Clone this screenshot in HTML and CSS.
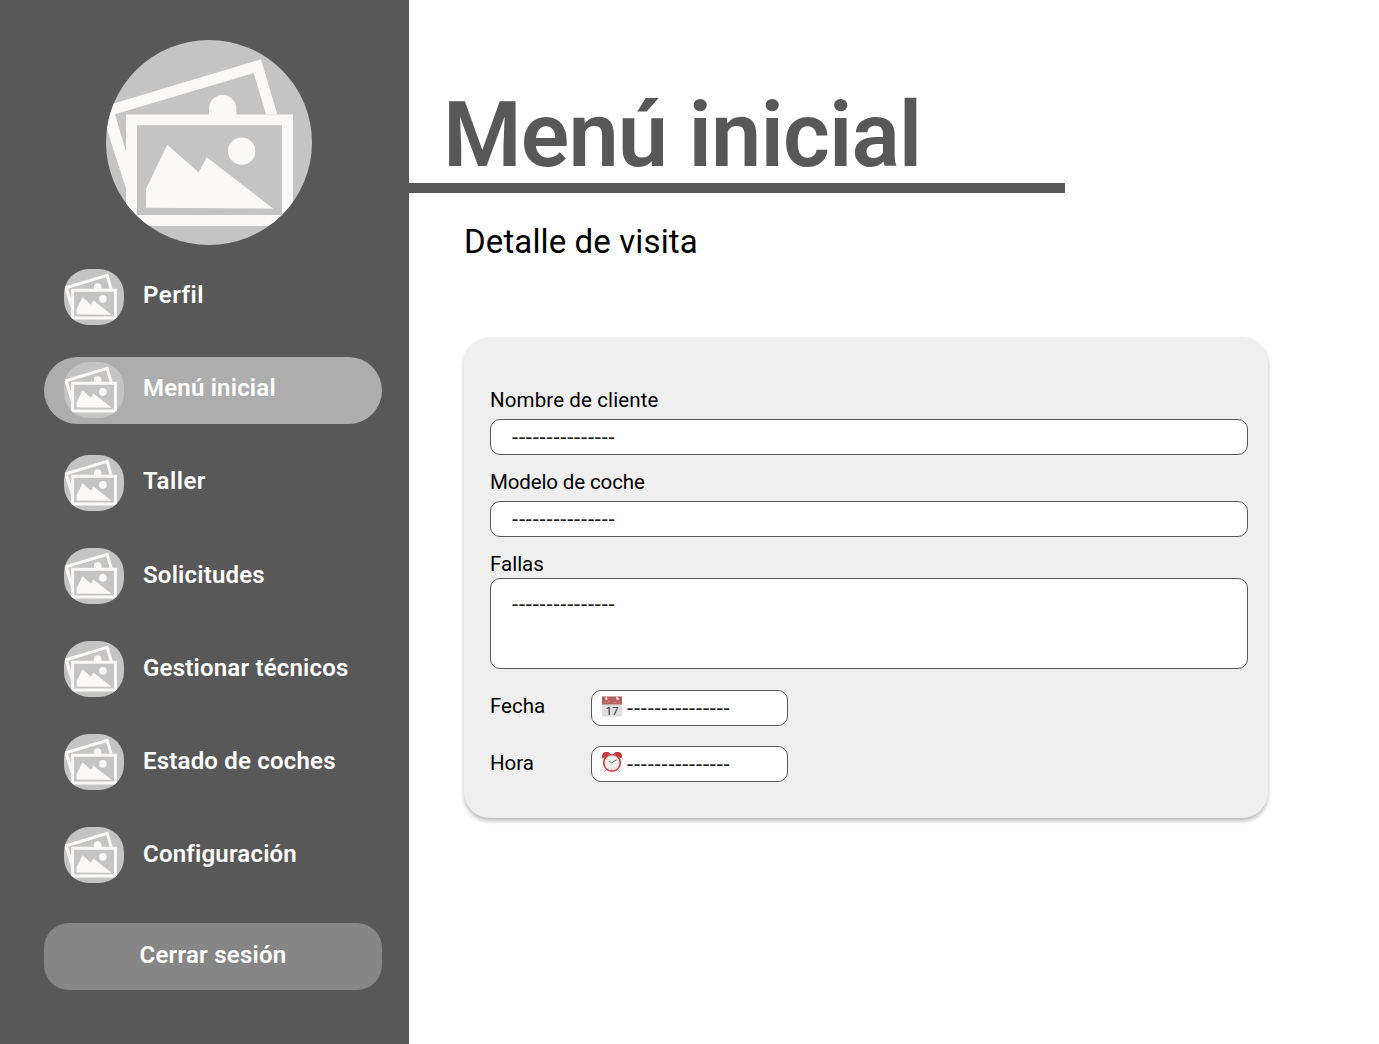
FILE: index.html
```html
<!DOCTYPE html>
<html lang="es">
<head>
<meta charset="utf-8">
<title>Menú inicial</title>
<link rel="stylesheet" href="styles.css">
</head>
<body>
<svg class="defs" aria-hidden="true">
  <defs>
    <g id="photos">
      <rect width="800" height="800" fill="#c4c4c4"/>
      <g fill="#faf9f7">
        <path d="M30 247L513 102L562 268H528L491 143L75 267L108 380V490Z"/>
        <path d="M357 270V250A41 41 0 0 1 439 250V270Z"/>
        <path fill-rule="evenodd" d="M108 268H609V603H108ZM141 300V570H576V300Z"/>
        <circle cx="455" cy="378" r="41"/>
        <path d="M168 548V492L232 359L326 442L350 396L550 551Z"/>
      </g>
    </g>
  </defs>
</svg>
<div class="app">
  <aside class="sidebar">
    <svg class="avatar" viewBox="48 44 618 616" preserveAspectRatio="none"><use href="#photos"/></svg>
    <nav class="menu">
      <a class="item"><svg class="thumb" viewBox="30 53 656 609" preserveAspectRatio="none"><use href="#photos"/></svg><span class="wide">Perfil</span></a>
      <a class="item active"><svg class="thumb" viewBox="30 53 656 609" preserveAspectRatio="none"><use href="#photos"/></svg><span>Menú inicial</span></a>
      <a class="item"><svg class="thumb" viewBox="30 53 656 609" preserveAspectRatio="none"><use href="#photos"/></svg><span class="wide">Taller</span></a>
      <a class="item low"><svg class="thumb" viewBox="30 53 656 609" preserveAspectRatio="none"><use href="#photos"/></svg><span>Solicitudes</span></a>
      <a class="item low"><svg class="thumb" viewBox="30 53 656 609" preserveAspectRatio="none"><use href="#photos"/></svg><span>Gestionar técnicos</span></a>
      <a class="item low"><svg class="thumb" viewBox="30 53 656 609" preserveAspectRatio="none"><use href="#photos"/></svg><span>Estado de coches</span></a>
      <a class="item low"><svg class="thumb" viewBox="30 53 656 609" preserveAspectRatio="none"><use href="#photos"/></svg><span>Configuración</span></a>
    </nav>
    <button class="logout">Cerrar sesión</button>
  </aside>
  <main class="content">
    <h1 class="title">Menú inicial</h1>
    <h2 class="subtitle">Detalle de visita</h2>
    <section class="card">
      <div class="label client">Nombre de cliente</div>
      <div class="field">---------------</div>
      <div class="label model">Modelo de coche</div>
      <div class="field">---------------</div>
      <div class="label tight">Fallas</div>
      <div class="field area">---------------</div>
      <div class="row">
        <div class="label">Fecha</div>
        <div class="field small">
          <svg class="icon" viewBox="0 0 60 60">
            <rect width="60" height="60" fill="#dedede"/>
            <rect width="60" height="24" fill="#b5605e"/>
            <path d="M4 18l4-4 3 4h5l4-5 3 5M34 18h10M49 19l5-5" fill="none" stroke="#d39a98" stroke-width="2"/>
            <path d="M13 0v6M45 0v6" stroke="#fff" stroke-width="3"/>
            <circle cx="13" cy="7" r="3.5" fill="#fff"/><circle cx="47" cy="7" r="3.5" fill="#fff"/>
            <text x="30" y="55" class="day">17</text>
          </svg>
          <span>---------------</span>
        </div>
      </div>
      <div class="row">
        <div class="label time">Hora</div>
        <div class="field small">
          <svg class="icon" viewBox="0 0 60 60">
            <path d="M14 50L7 59M46 50L53 59" stroke="#999" stroke-width="3"/>
            <path d="M2 18A13 13 0 0 1 25 4ZM58 18A13 13 0 0 0 35 4Z" fill="#c4393d"/>
            <circle cx="30" cy="31" r="25" fill="#f0eeec" stroke="#cf3f43" stroke-width="5"/>
            <circle cx="30" cy="31" r="19" fill="none" stroke="#d88" stroke-width="3" stroke-dasharray="1.5 8.45"/>
            <path d="M20 26L29 31L44 22" fill="none" stroke="#555" stroke-width="2.5"/>
          </svg>
          <span>---------------</span>
        </div>
      </div>
    </section>
  </main>
</div>
</body>
</html>
```
FILE: styles.css
```css
* { box-sizing: border-box; }
body { margin: 0; background: #fff; font-family: Roboto, "Open Sans", sans-serif; color: #000; }
.defs { display: none; }
.app { display: flex; width: 1379px; height: 1044px; overflow: hidden; }
.sidebar { width: 409px; background: #585858; padding: 40px 27px 0 44px; flex: none; display: flex; flex-direction: column; }
.avatar { display: block; width: 206px; height: 205px; border-radius: 50%; margin-left: 62px; flex: none; }
.menu { display: flex; flex-direction: column; gap: 26px; margin-top: 19px; }
.item { display: flex; height: 67px; border-radius: 34px; padding: 5px 0 0 20px; gap: 19px; color: #fff; font-size: 24px; font-weight: 600; line-height: 53px; letter-spacing: .2px; white-space: nowrap; }
.item.low { line-height: 55px; }
.item .wide { letter-spacing: .5px; }
.item.active { background: #adadad; }
.thumb { width: 60px; height: 56px; border-radius: 25px; flex: none; }
.logout { margin-top: 34px; height: 67px; border: 0; border-radius: 25px; background: #868686; color: #fff; font: 600 24px/60px Roboto, sans-serif; letter-spacing: .25px; padding: 0 0 3px; }
.content { flex: 1; }
.title { margin: 0; width: 656px; height: 193px; padding: 83px 0 0 34px; border-bottom: 10px solid #585858; font-size: 90px; line-height: 105px; font-weight: 600; letter-spacing: -.9px; color: #585858; white-space: nowrap; }
.subtitle { margin: 29px 0 0 55px; font-size: 33px; line-height: 40px; font-weight: 400; letter-spacing: .12px; }
.card { width: 804px; height: 481px; margin: 75px 0 0 55px; background: #efefef; border-radius: 26px; box-shadow: 0 3px 4px rgba(0,0,0,.27); padding: 50px 20px 0 26px; }
.label { font-size: 20.5px; line-height: 26px; height: 32px; }
.label.client { letter-spacing: .12px; }
.label.model { letter-spacing: -.13px; }
.label.tight { height: 27px; }
.field { height: 36px; border: 1px solid #585858; border-radius: 10px; background: #fff; padding-left: 21px; margin-bottom: 14px; font-size: 22px; line-height: 35px; letter-spacing: .82px; color: #222; }
.field.area { height: 91px; line-height: 51px; margin-bottom: 21px; }
.row { display: flex; height: 56px; }
.row .label { width: 101px; padding-top: 3px; }
.row .label.time { padding-top: 4px; }
.field.small { width: 197px; padding: 5px 0 0 10px; display: flex; gap: 5px; line-height: 25px; }
.icon { width: 20px; height: 21px; flex: none; }
.day { font: 35px Roboto, sans-serif; letter-spacing: 0; text-anchor: middle; fill: #333; }
```
